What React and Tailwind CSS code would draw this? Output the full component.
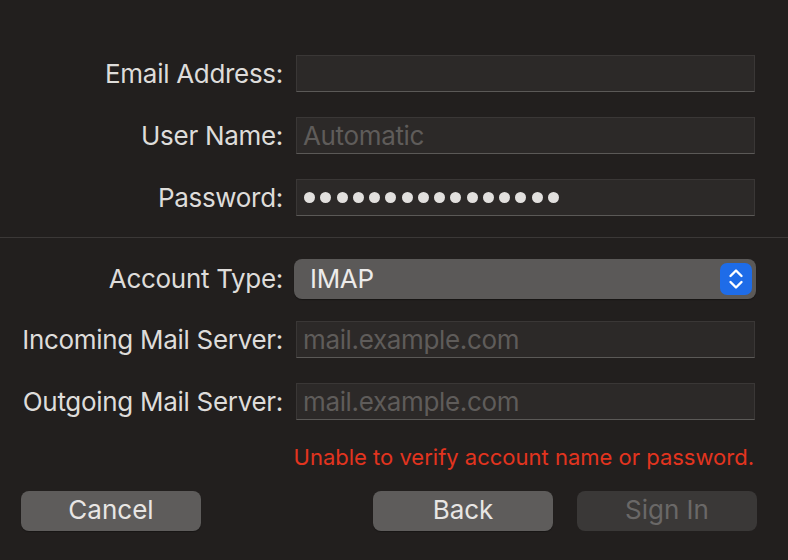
import React from "react";

const font = { fontFamily: "Inter, 'Noto Sans', sans-serif" };

function Field({ label, placeholder, children }) {
  return (
    <div className="flex items-center">
      <div className="w-[283px] text-right text-[26px] leading-none tracking-[-0.3px] text-[#dedcda]">{label}</div>
      <div className="ml-[13px] flex h-[37px] w-[459px] items-center border border-[#3a3736] border-b-[#5b5957] bg-[#2c2928] px-[6px]">
        {children || (
          <span className="text-[26px] leading-none tracking-[-0.35px] text-[#5f5c5a]">{placeholder}</span>
        )}
      </div>
    </div>
  );
}

function Button({ children, disabled }) {
  return (
    <button
      className={
        "h-[40px] w-[180px] rounded-[8px] pb-[2px] text-[26px] leading-none " +
        (disabled ? "bg-[#3a3837] text-[#6a6867]" : "bg-[#5e5c5b] text-[#e8e6e4] shadow-[0_1px_1px_rgba(0,0,0,0.3)]")
      }
    >
      {children}
    </button>
  );
}

export default function App() {
  return (
    <div className="h-[560px] w-[788px] overflow-hidden bg-[#221f1e]" style={font}>
      <div className="flex flex-col gap-[25px] pt-[55px]">
        <Field label="Email Address:" />
        <Field label="User Name:" placeholder="Automatic" />
        <Field label="Password:">
          <div className="flex gap-[5.25px] pl-[1px]">
            {Array.from({ length: 16 }).map((_, i) => (
              <div key={i} className="h-[11px] w-[11px] rounded-full bg-[#e2e0de]" />
            ))}
          </div>
        </Field>
      </div>

      <div className="mt-[21px] h-px bg-[#3b3837]" />

      <div className="mt-[21px] flex items-center">
        <div className="w-[283px] text-right text-[26px] leading-none tracking-[-0.3px] text-[#dedcda]">Account Type:</div>
        <div className="ml-[11px] flex h-[40px] w-[462px] items-center justify-between rounded-[8px] bg-[#5b5958] pl-[16px] pr-[4px] shadow-[0_1px_1px_rgba(0,0,0,0.35)]">
          <span className="text-[26px] leading-none tracking-[-0.3px] text-[#ecebea]">IMAP</span>
          <div className="flex h-[32px] w-[32px] items-center justify-center rounded-[7px] bg-[#1e6ce8]">
            <svg width="16" height="24" viewBox="0 0 16 24" fill="none" stroke="#ffffff" strokeWidth="2.4" strokeLinecap="round" strokeLinejoin="round">
              <path d="M2.5 9 L8 3.5 L13.5 9" />
              <path d="M2.5 15 L8 20.5 L13.5 15" />
            </svg>
          </div>
        </div>
      </div>

      <div className="mt-[22px] flex flex-col gap-[25px]">
        <Field label="Incoming Mail Server:" placeholder="mail.example.com" />
        <Field label="Outgoing Mail Server:" placeholder="mail.example.com" />
      </div>

      <div className="mt-[26px] pr-[34px] text-right text-[22px] leading-none text-[#e3341f]">
        Unable to verify account name or password.
      </div>

      <div className="mt-[23px] flex items-center pl-[21px]">
        <Button>Cancel</Button>
        <div className="ml-[172px] flex gap-[24px]">
          <Button>Back</Button>
          <Button disabled>Sign In</Button>
        </div>
      </div>
    </div>
  );
}
